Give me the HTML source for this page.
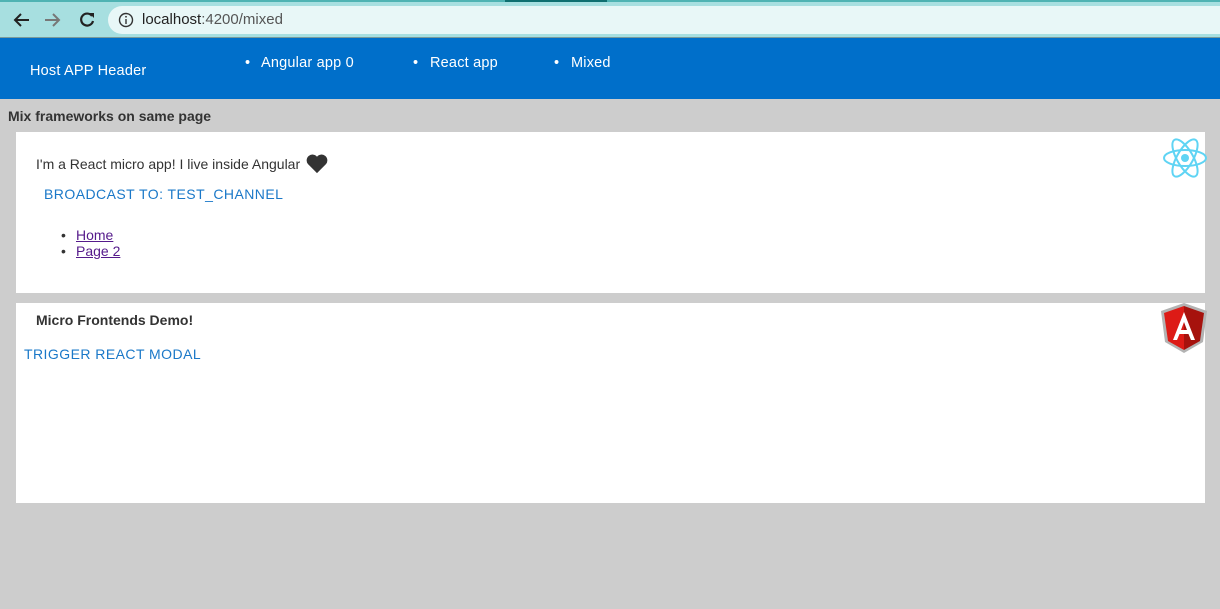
<!DOCTYPE html>
<html><head><style>
*{margin:0;padding:0;box-sizing:border-box}
body{width:1220px;height:609px;background:#cdcdcd;font-family:"Liberation Sans",sans-serif;position:relative;overflow:hidden}
.a{position:absolute;white-space:nowrap}
.n{font-size:14.5px;color:#fff;letter-spacing:.2px}
</style></head><body>
<div class="a" style="left:0;top:0;width:1220px;height:38px;background:#a7dfe0"></div>
<div class="a" style="left:0;top:0;width:1220px;height:2px;background:#4fb3b3"></div>
<div class="a" style="left:505px;top:0;width:102px;height:2px;background:#0f6f70"></div>
<div class="a" style="left:108px;top:6px;width:1130px;height:28px;background:#e8f7f7;border-radius:14px"></div>
<div class="a" style="left:0;top:37px;width:1220px;height:1px;background:#7a9a9a"></div>
<svg class="a" style="left:12px;top:10px" width="100" height="20" viewBox="0 0 100 20">
<path d="M17 10H4M9 4L3 10L9 16" stroke="#222" stroke-width="2" fill="none"/>
<path d="M33 10H46M41 4L47 10L41 16" stroke="#777" stroke-width="2" fill="none"/>
<path d="M80 6A6 6 0 1 0 81 11" stroke="#222" stroke-width="2.2" fill="none"/><path d="M77 3h5v5z" fill="#222"/>
</svg>
<svg class="a" style="left:118px;top:12px" width="16" height="16"><circle cx="8" cy="8" r="6.5" stroke="#333" stroke-width="1.4" fill="none"/><rect x="7.3" y="7" width="1.4" height="5" fill="#333"/><circle cx="8" cy="4.8" r="0.9" fill="#333"/></svg>
<div class="a" style="left:142px;top:11px;font-size:15px;color:#222">localhost<span style="color:#555">:4200/mixed</span></div>
<div class="a" style="left:0;top:38px;width:1220px;height:61px;background:#006fca"></div>
<div class="a n" style="left:30px;top:63px">Host APP Header</div>
<div class="a n" style="left:245px;top:55px">•</div><div class="a n" style="left:261px;top:55px">Angular app 0</div>
<div class="a n" style="left:413px;top:55px">•</div><div class="a n" style="left:430px;top:55px">React app</div>
<div class="a n" style="left:554px;top:55px">•</div><div class="a n" style="left:571px;top:55px">Mixed</div>
<div class="a" style="left:8px;top:108px;font-size:14px;color:#333;font-weight:bold">Mix frameworks on same page</div>
<div class="a" style="left:16px;top:132px;width:1189px;height:161px;background:#fff"></div>
<div class="a" style="left:16px;top:303px;width:1189px;height:200px;background:#fff"></div>
<div class="a" style="left:36px;top:156px;font-size:14px;color:#333">I'm a React micro app! I live inside Angular</div>
<svg class="a" style="left:306px;top:154px" width="22" height="20" viewBox="0 0 24 22"><path d="M12 21L2 11A5.5 5.5 0 0 1 12 3A5.5 5.5 0 0 1 22 11Z" fill="#333"/></svg>
<div class="a" style="left:44px;top:186px;font-size:14px;color:#1a78c8;letter-spacing:.45px">BROADCAST TO: TEST_CHANNEL</div>
<div class="a" style="left:61px;top:227px;font-size:14px;line-height:16px;color:#333">•</div>
<div class="a" style="left:61px;top:243px;font-size:14px;line-height:16px;color:#333">•</div>
<div class="a" style="left:76px;top:227px;font-size:14px;line-height:16px;color:#551a8b;text-decoration:underline">Home</div>
<div class="a" style="left:76px;top:243px;font-size:14px;line-height:16px;color:#551a8b;text-decoration:underline">Page 2</div>
<div class="a" style="left:36px;top:312px;font-size:14px;color:#333;font-weight:bold">Micro Frontends Demo!</div>
<div class="a" style="left:24px;top:346px;font-size:14px;color:#1a78c8;letter-spacing:.45px">TRIGGER REACT MODAL</div>
<svg class="a" style="left:1162px;top:137px" width="46" height="42" viewBox="-23 -21 46 42">
<g stroke="#5fd4f4" stroke-width="2" fill="none"><ellipse rx="21" ry="8"/><ellipse rx="21" ry="8" transform="rotate(60)"/><ellipse rx="21" ry="8" transform="rotate(120)"/></g><circle r="4" fill="#5fd4f4"/></svg>
<svg class="a" style="left:1160px;top:303px" width="48" height="50" viewBox="0 0 48 50">
<path d="M24 0L47 8L43 39L24 50L5 39L1 8Z" fill="#b3b3b3"/>
<path d="M24 3L44 10L40 38L24 47Z" fill="#a6120d"/><path d="M24 3L4 10L8 38L24 47Z" fill="#dd1b16"/>
<path d="M24 9L13 37H17L19.5 31H28.5L31 37H35ZM21 27L24 19L27 27Z" fill="#fff"/></svg>
</body></html>
